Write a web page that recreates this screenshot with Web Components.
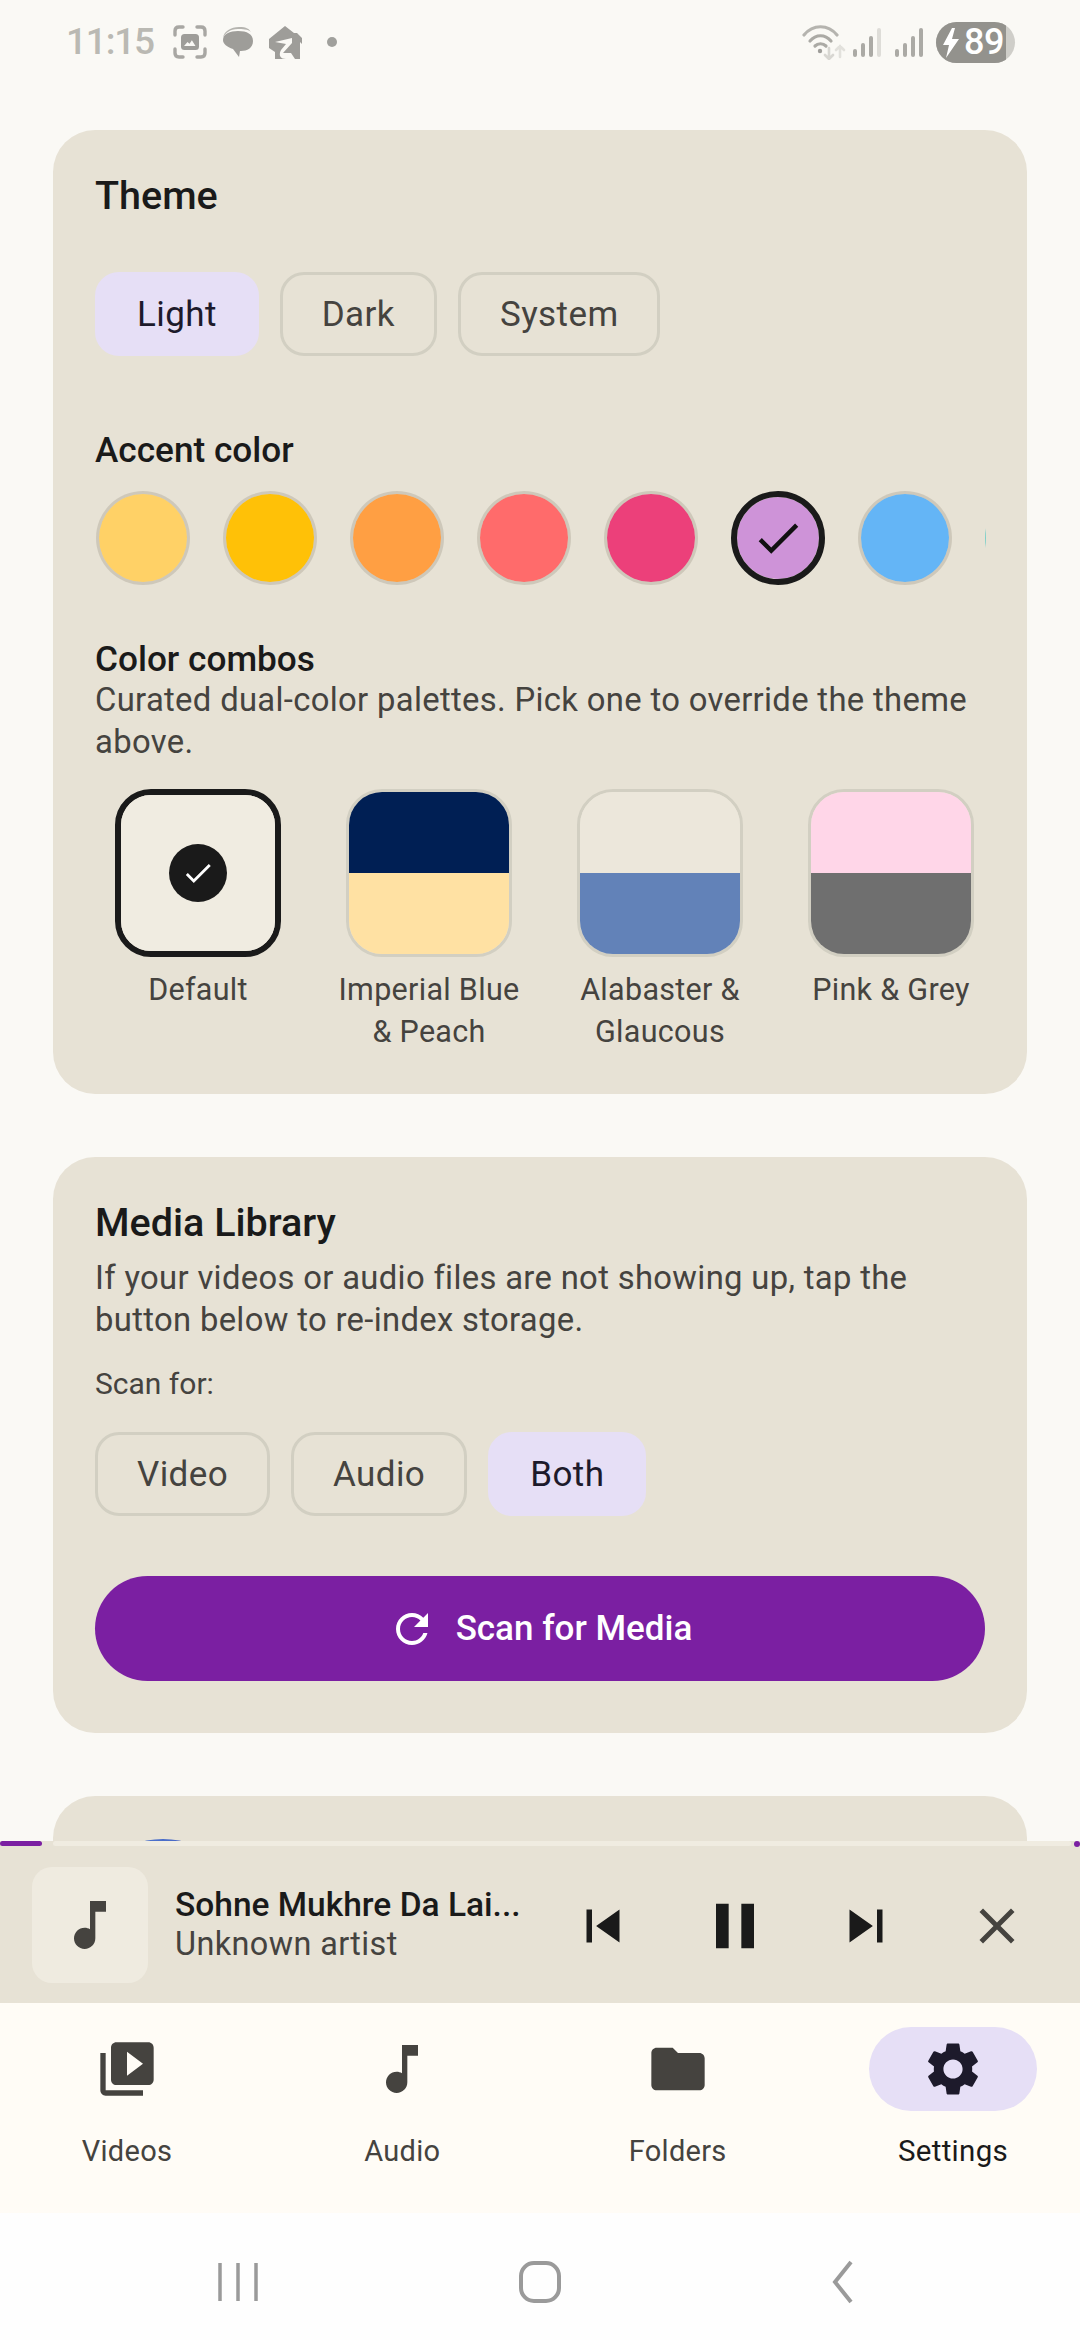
<!DOCTYPE html>
<html lang="en">
<head>
<meta charset="utf-8">
<title>Settings</title>
<style>
  html, body { margin: 0; padding: 0; }
  body {
    width: 1080px;
    height: 2340px;
    overflow: hidden;
    display: flex;
    flex-direction: column;
    background: #FAF9F5;
    color: #1A1A1A;
    font-family: Roboto, "Liberation Sans", sans-serif;
  }
  .scroll {
    flex: none;
    height: 1711px;
    overflow: hidden;
    display: flex;
    flex-direction: column;
    gap: 63px;
    padding: 0 53px;
  }
  .row { display: flex; gap: 21px; }
  .title { font-size: 39.5px; font-weight: 500; line-height: 48px; }
  .label { font-size: 35.2px; font-weight: 500; line-height: 40px; }
  .desc { font-size: 32.8px; line-height: 42px; color: #45433F; letter-spacing: 0.33px; }
  .swatches { display: flex; gap: 33px; width: 891px; box-sizing: border-box; padding-left: 1px; overflow: hidden; margin-top: 21px; }
  .combos { display: flex; gap: 25px; margin-top: 26px; }
  .theme-chips { margin-top: 52px; }
  .accent-label { margin-top: 74px; }
  .combo-label { margin-top: 54px; }
  .combo-desc { margin-top: -0.5px; }
  .media-desc { margin-top: 10px; }
  .scan-label { font-size: 30px; line-height: 36px; color: #45433F; margin-top: 25px; }
  .media-chips { margin-top: 30px; }
  .blob {
    width: 168px;
    height: 168px;
    border-radius: 50%;
    margin: 1px 0 0 -16px;
    background: linear-gradient(90deg, #4F7FD6, #4A6CC8 55%, #5A4BA4);
  }
</style>
</head>
<body>

<status-bar></status-bar>

<div class="scroll">
  <settings-card>
    <div class="title">Theme</div>
    <div class="row theme-chips">
      <seg-chip active>Light</seg-chip>
      <seg-chip>Dark</seg-chip>
      <seg-chip>System</seg-chip>
    </div>
    <div class="label accent-label">Accent color</div>
    <div class="swatches">
      <accent-swatch color="#FFD166"></accent-swatch>
      <accent-swatch color="#FFC107"></accent-swatch>
      <accent-swatch color="#FF9F43"></accent-swatch>
      <accent-swatch color="#FF6B6B"></accent-swatch>
      <accent-swatch color="#EC407A"></accent-swatch>
      <accent-swatch color="#CE93D8" selected></accent-swatch>
      <accent-swatch color="#64B5F6"></accent-swatch>
      <accent-swatch color="#7FCFC8" style="border-color:transparent;background-clip:border-box"></accent-swatch>
    </div>
    <div class="label combo-label">Color combos</div>
    <div class="desc combo-desc">Curated dual-color palettes. Pick one to override the theme above.</div>
    <div class="combos">
      <combo-tile top="#F0ECE1" bottom="#F0ECE1" selected>Default</combo-tile>
      <combo-tile top="#001F54" bottom="#FFE1A3">Imperial Blue &amp; Peach</combo-tile>
      <combo-tile top="#ECE7DB" bottom="#6282B8">Alabaster &amp; Glaucous</combo-tile>
      <combo-tile top="#FFD6E8" bottom="#6F6F6F">Pink &amp; Grey</combo-tile>
    </div>
  </settings-card>

  <settings-card>
    <div class="title">Media Library</div>
    <div class="desc media-desc">If your videos or audio files are not showing up, tap the button below to re-index storage.</div>
    <div class="scan-label">Scan for:</div>
    <div class="row media-chips">
      <seg-chip>Video</seg-chip>
      <seg-chip>Audio</seg-chip>
      <seg-chip active>Both</seg-chip>
    </div>
    <scan-button>Scan for Media</scan-button>
  </settings-card>

  <settings-card>
    <div class="blob"></div>
  </settings-card>
</div>

<mini-player title-text="Sohne Mukhre Da Lai..." artist="Unknown artist"></mini-player>

<bottom-nav>
  <nav-item icon="video">Videos</nav-item>
  <nav-item icon="note">Audio</nav-item>
  <nav-item icon="folder">Folders</nav-item>
  <nav-item icon="settings" active>Settings</nav-item>
</bottom-nav>

<sys-nav></sys-nav>

<script>
const ICONS = {
  video: 'M4 6H2v14c0 1.1.9 2 2 2h14v-2H4V6zm16-4H8c-1.1 0-2 .9-2 2v12c0 1.1.9 2 2 2h12c1.1 0 2-.9 2-2V4c0-1.1-.9-2-2-2zm-8 12.5v-9l6 4.5-6 4.5z',
  note: 'M12 3v10.55c-.59-.34-1.27-.55-2-.55-2.21 0-4 1.79-4 4s1.79 4 4 4 4-1.79 4-4V7h4V3h-6z',
  folder: 'M10 4H4c-1.1 0-1.99.9-1.99 2L2 18c0 1.1.9 2 2 2h16c1.1 0 2-.9 2-2V8c0-1.1-.9-2-2-2h-8l-2-2z',
  settings: 'M19.14 12.94c.04-.3.06-.61.06-.94 0-.32-.02-.64-.07-.94l2.03-1.58c.18-.14.23-.41.12-.61l-1.92-3.32c-.12-.22-.37-.29-.59-.22l-2.39.96c-.5-.38-1.03-.7-1.62-.94l-.36-2.54c-.04-.24-.24-.41-.48-.41h-3.84c-.24 0-.43.17-.47.41l-.36 2.54c-.59.24-1.13.57-1.62.94l-2.39-.96c-.22-.08-.47 0-.59.22L2.74 8.87c-.12.21-.08.47.12.61l2.03 1.58c-.05.3-.09.63-.09.94s.02.64.07.94l-2.03 1.58c-.18.14-.23.41-.12.61l1.92 3.32c.12.22.37.29.59.22l2.39-.96c.5.38 1.03.7 1.62.94l.36 2.54c.05.24.24.41.48.41h3.84c.24 0 .44-.17.47-.41l.36-2.54c.59-.24 1.13-.56 1.62-.94l2.39.96c.22.08.47 0 .59-.22l1.92-3.32c.12-.22.07-.47-.12-.61l-2.01-1.58zM12 15.6c-1.98 0-3.6-1.62-3.6-3.6s1.62-3.6 3.6-3.6 3.6 1.62 3.6 3.6-1.62 3.6-3.6 3.6z',
  prev: 'M6 6h2v12H6zm3.5 6l8.5 6V6z',
  next: 'M6 18l8.5-6L6 6v12zM16 6v12h2V6h-2z',
  pause: 'M6 19h4V5H6v14zm8-14v14h4V5h-4z',
  close: 'M19 6.41L17.59 5 12 10.59 6.41 5 5 6.41 10.59 12 5 17.59 6.41 19 12 13.41 17.59 19 19 17.59 13.41 12z',
  refresh: 'M17.65 6.35C16.2 4.9 14.21 4 12 4c-4.42 0-7.99 3.58-7.99 8s3.57 8 7.99 8c3.73 0 6.84-2.55 7.73-6h-2.08c-.82 2.33-3.04 4-5.65 4-3.31 0-6-2.69-6-6s2.69-6 6-6c1.66 0 3.14.69 4.22 1.78L13 11h7V4l-2.35 2.35z',
  check: 'M9 16.17L4.83 12l-1.42 1.41L9 19 21 7l-1.41-1.41z',
};

const svgIcon = (name, size, color) =>
  `<svg width="${size}" height="${size}" viewBox="0 0 24 24" fill="${color}" style="display:block;flex:none"><path d="${ICONS[name]}"/></svg>`;

class StatusBar extends HTMLElement {
  constructor() {
    super();
    this.attachShadow({ mode: 'open' }).innerHTML = `
      <style>
        :host { display: flex; align-items: center; height: 130px; box-sizing: border-box; padding: 0 65px 46px 66px; flex: none; }
        .time { font-size: 37px; font-weight: 500; color: #BAB9B3; letter-spacing: -1.2px; line-height: 84px; width: 107px; }
        svg { display: block; flex: none; }
        .left { display: flex; align-items: center; }
        .spacer { flex: 1; }
        .batt { position: relative; width: 79px; height: 41px; border-radius: 21px; overflow: hidden; background: #CFCEC9; flex: none; margin-left: 13px; }
        .batt .fill { position: absolute; inset: 0 9px 0 0; background: #93928D; }
        .batt span { position: absolute; right: 11px; top: 0; line-height: 41px; font-size: 36px; font-weight: 500; color: #fff; letter-spacing: -0.5px; }
        .batt svg { position: absolute; left: 7px; top: 6px; }
      </style>
      <div class="left">
        <div class="time">11:15</div>
        <svg width="34" height="34" viewBox="0 0 34 34" fill="none" stroke="#A8A7A3" stroke-width="3.4" stroke-linecap="round">
          <path d="M2 10V6q0-4 4-4h4M24 2h4q4 0 4 4v4M2 24v4q0 4 4 4h4M24 32h4q4 0 4-4v-4"/>
          <rect x="8" y="9" width="18" height="16" rx="3.5" fill="#9E9D99" stroke="none"/>
          <path d="M11 21l3.5-4 2 1.8 2.4-3.6 3.6 5.8z" fill="#FAF9F5" stroke="none"/>
        </svg>
        <svg width="32" height="32" viewBox="0 0 32 32" style="margin-left:15px">
          <path d="M1 12C2 5 9 1 17 1s10 2 12 5C26 3 20 3 16 3 8 3 3 7 1 12z" fill="#B5B4AF"/>
          <path d="M16 5c9 0 15 3 15 10 0 7-6 10-12 10h-1l-1 6-6-8C5 21 1 18 1 14 1 8 8 5 16 5z" fill="#9E9D99"/>
        </svg>
        <svg width="36" height="33" viewBox="0 0 36 33" style="margin-left:13px">
          <path d="M18 0l9 7h3l5 5v6l-2-2v17H8v-7L2 22V13z" fill="#9E9D99"/>
          <path d="M8 16l17-4v5L16 27h8l4 6H19c-5 0-8-3-5-9l5-6z" fill="#FAF9F5"/>
        </svg>
        <svg width="10" height="10" viewBox="0 0 10 10" style="margin-left:24px"><circle cx="5" cy="5" r="5" fill="#A0A09C"/></svg>
      </div>
      <div class="spacer"></div>
      <svg width="46" height="36" viewBox="0 0 46 36" fill="none" stroke-linecap="round">
        <path d="M2 11c9-11 24-11 33 0" stroke="#B5B4AF" stroke-width="3.2"/>
        <path d="M8 17c6-7 15-7 21 0" stroke="#ABAAA5" stroke-width="3.2"/>
        <path d="M13 22c3-3 8-3 11 0" stroke="#ABAAA5" stroke-width="3.2"/>
        <circle cx="18" cy="27" r="2.2" fill="#9E9D99"/>
        <path d="M27 24v11M23 31l4 4 4-4" stroke="#D8D7D2" stroke-width="2.6"/>
        <path d="M38 33V22M34 26l4-4 4 4" stroke="#E2E1DC" stroke-width="2.6"/>
      </svg>
      <svg width="28" height="29" viewBox="0 0 28 29" style="margin-left:5px" fill="#ABAAA5">
        <rect x="0" y="21" width="4" height="8" rx="2"/><rect x="8" y="15" width="4" height="14" rx="2"/><rect x="16" y="8" width="4" height="21" rx="2"/><rect x="24" y="0" width="4" height="29" rx="2" fill="#DEDDD8"/>
      </svg>
      <svg width="28" height="29" viewBox="0 0 28 29" style="margin-left:14px" fill="#ABAAA5">
        <rect x="0" y="21" width="4" height="8" rx="2"/><rect x="8" y="15" width="4" height="14" rx="2"/><rect x="16" y="8" width="4" height="21" rx="2"/><rect x="24" y="0" width="4" height="29" rx="2"/>
      </svg>
      <div class="batt">
        <div class="fill"></div>
        <svg width="16" height="30" viewBox="0 0 16 30"><path d="M9 0L0 17h6L3 30 16 11H9l3-11z" fill="#fff"/></svg>
        <span>89</span>
      </div>`;
  }
}

class SettingsCard extends HTMLElement {
  constructor() {
    super();
    this.attachShadow({ mode: 'open' }).innerHTML = `
      <style>
        :host { display: block; flex: none; background: #E7E2D5; border-radius: 42px; padding: 42px 42px 41px; }
      </style>
      <slot></slot>`;
  }
}

class SegChip extends HTMLElement {
  constructor() {
    super();
    this.attachShadow({ mode: 'open' }).innerHTML = `
      <style>
        :host { display: flex; align-items: center; height: 84px; box-sizing: border-box; padding: 0 39px; border: 3px solid #D2CFC2; border-radius: 24px; font-size: 35px; letter-spacing: 0.4px; color: #45433F; }
        :host([active]) { background: #E6DFF6; border-color: #E6DFF6; color: #1D1A2B; }
      </style>
      <slot></slot>`;
  }
}

class AccentSwatch extends HTMLElement {
  constructor() {
    super();
    const selected = this.hasAttribute('selected');
    this.attachShadow({ mode: 'open' }).innerHTML = `
      <style>
        :host { display: flex; align-items: center; justify-content: center; width: 94px; height: 94px; flex: none; box-sizing: border-box; border-radius: 50%; border: 3px solid rgba(120,110,90,.22); background-clip: padding-box; }
        :host([selected]) { border: 6px solid #1A1A1A; }
      </style>
      ${selected ? svgIcon('check', 54, '#111') : ''}`;
    this.style.backgroundColor = this.getAttribute('color');
  }
}

class ComboTile extends HTMLElement {
  constructor() {
    super();
    const top = this.getAttribute('top');
    const bottom = this.getAttribute('bottom');
    const selected = this.hasAttribute('selected');
    this.attachShadow({ mode: 'open' }).innerHTML = `
      <style>
        :host { display: flex; flex-direction: column; align-items: center; width: 206px; flex: none; }
        .tile { position: relative; width: 166px; height: 168px; box-sizing: border-box; border: 3px solid #D2CFC2; border-radius: 36px; overflow: hidden; display: flex; flex-direction: column; }
        :host([selected]) .tile { border: 6px solid #1A1A1A; }
        .half { flex: 1; }
        .mark { position: absolute; inset: 0; display: flex; align-items: center; justify-content: center; }
        .dot { width: 58px; height: 58px; border-radius: 50%; background: #1A1A1A; display: flex; align-items: center; justify-content: center; }
        .name { margin-top: 12.5px; font-size: 30.5px; line-height: 42px; letter-spacing: 0.3px; color: #45433F; text-align: center; width: 196px; }
      </style>
      <div class="tile">
        <div class="half" style="background:${top}"></div>
        <div class="half" style="background:${bottom}"></div>
        ${selected ? `<div class="mark"><div class="dot">${svgIcon('check', 34, '#fff')}</div></div>` : ''}
      </div>
      <div class="name"><slot></slot></div>`;
  }
}

class ScanButton extends HTMLElement {
  constructor() {
    super();
    this.attachShadow({ mode: 'open' }).innerHTML = `
      <style>
        :host { display: flex; align-items: center; justify-content: center; gap: 20px; height: 105px; margin-top: 60px; margin-bottom: 11px; border-radius: 53px; background: #7B1FA2; color: #fff; font-size: 35px; font-weight: 500; }
      </style>
      ${svgIcon('refresh', 48, '#fff')}<span><slot></slot></span>`;
  }
}

class MiniPlayer extends HTMLElement {
  constructor() {
    super();
    this.attachShadow({ mode: 'open' }).innerHTML = `
      <style>
        :host { position: relative; display: flex; align-items: center; flex: none; height: 162px; box-sizing: border-box; background: #E7E2D5; padding: 5px 0 0 32px; }
        .progress { position: absolute; left: 0; top: 0; right: 0; height: 5px; }
        .played { position: absolute; left: 0; top: 0; width: 42px; height: 5px; border-radius: 3px; background: #7B1FA2; }
        .track { position: absolute; left: 53px; right: 9px; top: 0; height: 5px; border-radius: 3px; background: #F0ECE1; }
        .stop { position: absolute; right: 0; top: 0; width: 6px; height: 6px; border-radius: 50%; background: #7B1FA2; }
        .thumb { width: 116px; height: 116px; border-radius: 20px; background: #EFEBE0; display: flex; align-items: center; justify-content: center; flex: none; }
        .meta { margin: 0 0 4px 27px; width: 358px; flex: none; }
        .name { font-size: 33.5px; font-weight: 500; line-height: 44px; color: #1A1A1A; white-space: nowrap; }
        .artist { font-size: 32.4px; line-height: 36px; margin-top: -0.5px; letter-spacing: 0.4px; color: #45433F; }
        .ctl { margin-top: 3px; }
        svg { display: block; flex: none; }
      </style>
      <div class="progress"><div class="played"></div><div class="track"></div><div class="stop"></div></div>
      <div class="thumb">${svgIcon('note', 64, '#45433F')}</div>
      <div class="meta">
        <div class="name">${this.getAttribute('title-text')}</div>
        <div class="artist">${this.getAttribute('artist')}</div>
      </div>
      <div class="ctl" style="margin-left:37px">${svgIcon('prev', 66, '#1A1A1A')}</div>
      <div class="ctl" style="margin-left:61px">${svgIcon('pause', 76, '#1A1A1A')}</div>
      <div class="ctl" style="margin-left:60px">${svgIcon('next', 66, '#1A1A1A')}</div>
      <div class="ctl" style="margin-left:68px">${svgIcon('close', 60, '#45433F')}</div>`;
  }
}

class BottomNav extends HTMLElement {
  constructor() {
    super();
    this.attachShadow({ mode: 'open' }).innerHTML = `
      <style>
        :host { display: flex; justify-content: space-between; flex: none; height: 210px; box-sizing: border-box; padding: 24px 43px 0 43px; background: #FFFCF6; }
      </style>
      <slot></slot>`;
  }
}

class NavItem extends HTMLElement {
  constructor() {
    super();
    const active = this.hasAttribute('active');
    this.attachShadow({ mode: 'open' }).innerHTML = `
      <style>
        :host { display: flex; flex-direction: column; align-items: center; width: 168px; }
        .pill { width: 168px; height: 84px; border-radius: 42px; display: flex; align-items: center; justify-content: center; }
        :host([active]) .pill { background: #E6DFF6; }
        .text { margin-top: 20px; font-size: 29px; line-height: 40px; letter-spacing: 0.3px; color: #45433F; white-space: nowrap; }
        :host([active]) .text { color: #1A1A1A; font-size: 29.5px; }
      </style>
      <div class="pill">${svgIcon(this.getAttribute('icon'), 64, active ? '#1D1A2B' : '#45433F')}</div>
      <div class="text"><slot></slot></div>`;
  }
}

class SysNav extends HTMLElement {
  constructor() {
    super();
    this.attachShadow({ mode: 'open' }).innerHTML = `
      <style>
        :host { display: flex; align-items: center; justify-content: center; gap: 242px; flex: 1; background: #FEFEFE; padding-top: 10px; }
        svg { display: block; flex: none; }
      </style>
      <svg width="60" height="44" viewBox="0 0 60 44" fill="none" stroke="#9A9A9A" stroke-width="3.5"><path d="M12 3v38M30 3v38M48 3v38"/></svg>
      <svg width="60" height="44" viewBox="0 0 60 44" fill="none" stroke="#9A9A9A" stroke-width="4"><rect x="11" y="3" width="38" height="38" rx="13"/></svg>
      <svg width="60" height="44" viewBox="0 0 60 44" fill="none" stroke="#9A9A9A" stroke-width="4"><path d="M39 2L23 22l16 20"/></svg>`;
  }
}

customElements.define('status-bar', StatusBar);
customElements.define('settings-card', SettingsCard);
customElements.define('seg-chip', SegChip);
customElements.define('accent-swatch', AccentSwatch);
customElements.define('combo-tile', ComboTile);
customElements.define('scan-button', ScanButton);
customElements.define('mini-player', MiniPlayer);
customElements.define('bottom-nav', BottomNav);
customElements.define('nav-item', NavItem);
customElements.define('sys-nav', SysNav);
</script>
</body>
</html>
